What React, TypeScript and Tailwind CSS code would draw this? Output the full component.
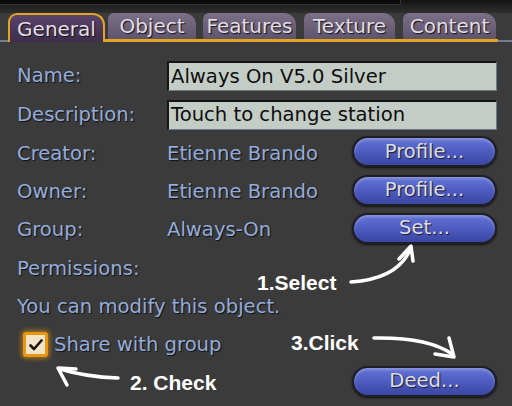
import React from 'react'

const tabs = [
  { label: 'General', w: 'w-[97px]', ml: 'ml-[8px]', active: true },
  { label: 'Object', w: 'w-[88px]', ml: 'ml-[3px]' },
  { label: 'Features', w: 'w-[93px]', ml: 'ml-[7px]' },
  { label: 'Texture', w: 'w-[91px]', ml: 'ml-[8px]' },
  { label: 'Content', w: 'w-[93px]', ml: 'ml-[8px]' },
]

const font = "font-['DejaVu_Sans',sans-serif]"
const shadow = '[text-shadow:1px_1px_1px_#111]'

function Label({ children }: { children: React.ReactNode }) {
  return <span className={`text-[19.6px] text-[#93acdc] ${shadow}`}>{children}</span>
}

function PillButton({ children }: { children: React.ReactNode }) {
  return (
    <button className="w-[145px] h-[31px] mb-[4px] rounded-full border-2 border-[#1e1e24] bg-gradient-to-b from-[#6374d6] via-[#4e5cc0] to-[#3a46a2] shadow-[inset_0_2px_3px_rgba(255,255,255,0.25),0_1px_2px_#111] flex items-center justify-center">
      <span className={`text-[19.6px] leading-none text-[#dcdce6] [text-shadow:1px_1px_1px_#1a1a30]`}>{children}</span>
    </button>
  )
}

function Field({ value }: { value: string }) {
  return (
    <div className="w-[330px] h-[30px] bg-[#c3cdc5] border-t-2 border-l-2 border-[#151515] border-b border-r border-b-[#6d7a8a] border-r-[#6d7a8a] flex items-center pl-[2px]">
      <span className="text-[19.6px] text-[#0e0e0e] leading-none">{value}</span>
    </div>
  )
}

export default function App() {
  return (
    <div className={`relative w-[512px] h-[406px] overflow-hidden bg-[#3b3b3b] ${font}`}>
      {/* top strip */}
      <div className="h-[13px] bg-gradient-to-b from-[#141414] to-[#2f2f2f] relative">
        <div className="w-[401px] h-[5px] bg-[#0b0b0b] border-b border-r border-[#333]" />
      </div>

      {/* tab bar */}
      <div className="flex items-end h-[29px] border-b-[3px] border-[#e3a323] ml-[8px] mr-[14px] relative">
        {tabs.map((t) => (
          <div
            key={t.label}
            className={
              t.active
                ? `w-[97px] h-[29px] -mb-[3px] rounded-tl-[9px] rounded-tr-[12px] border-2 border-b-0 border-[#e3a323] bg-gradient-to-b from-[#5a4368] to-[#3e2d4c] flex items-center justify-center`
                : `${t.w} ${t.ml} h-[26px] rounded-tl-[6px] rounded-tr-[12px] bg-gradient-to-b from-[#7c7088] to-[#5e546c] flex items-center justify-center`
            }
          >
            <span className={`text-[20px] leading-none text-[#e2dee8] ${shadow}`}>{t.label}</span>
          </div>
        ))}
      </div>
      <div className="absolute left-0 top-[40px] w-[8px] h-[2px] bg-[#6f7e94]" />
      <div className="absolute right-0 top-[40px] w-[14px] h-[2px] bg-[#6f7e94]" />

      {/* body */}
      <div className="pt-[15px] pl-[17px] pr-[15px] flex flex-col">
        <div className="h-[38px] flex items-center">
          <div className="w-[150px]"><Label>Name:</Label></div>
          <Field value="Always On V5.0 Silver" />
        </div>
        <div className="h-[39px] flex items-center">
          <div className="w-[150px]"><Label>Description:</Label></div>
          <Field value="Touch to change station" />
        </div>
        <div className="h-[39px] flex items-center">
          <div className="w-[150px]"><Label>Creator:</Label></div>
          <div className="flex-1"><Label>Etienne Brando</Label></div>
          <PillButton>Profile...</PillButton>
        </div>
        <div className="h-[38px] flex items-center">
          <div className="w-[150px]"><Label>Owner:</Label></div>
          <div className="flex-1"><Label>Etienne Brando</Label></div>
          <PillButton>Profile...</PillButton>
        </div>
        <div className="h-[38px] flex items-center">
          <div className="w-[150px]"><Label>Group:</Label></div>
          <div className="flex-1"><Label>Always-On</Label></div>
          <PillButton>Set...</PillButton>
        </div>
        <div className="h-[39px] flex items-center">
          <Label>Permissions:</Label>
        </div>
        <div className="h-[38px] flex items-center">
          <Label>You can modify this object.</Label>
        </div>
        <div className="h-[37px] flex items-center">
          <div className="w-[25px] h-[25px] ml-[6px] mr-[6px] rounded-[3px] border-[3px] border-[#e8960e] bg-[#f2e4c6] shadow-[0_0_4px_2px_rgba(232,150,14,0.55)] flex items-center justify-center">
            <svg width="14" height="12" viewBox="0 0 14 12">
              <path d="M1.5 6.5 L5 10 L12.5 1.5" fill="none" stroke="#1a140c" strokeWidth="2.6" strokeLinecap="round" strokeLinejoin="round" />
            </svg>
          </div>
          <Label>Share with group</Label>
        </div>
        <div className="h-[36px] flex items-center justify-end">
          <div className="mt-[4px] flex"><PillButton>Deed...</PillButton></div>
        </div>
      </div>

      {/* annotations */}
      <span className="absolute left-[257px] top-[267px] text-[21px] font-bold text-white font-['Liberation_Sans',sans-serif]">1.Select</span>
      <span className="absolute left-[291px] top-[327px] text-[21px] font-bold text-white font-['Liberation_Sans',sans-serif]">3.Click</span>
      <span className="absolute left-[130px] top-[367px] text-[21px] font-bold text-white font-['Liberation_Sans',sans-serif]">2. Check</span>
      <svg className="absolute inset-0 pointer-events-none" width="512" height="406" viewBox="0 0 512 406">
        <g fill="none" stroke="#fff" strokeWidth="3.5" strokeLinecap="round" strokeLinejoin="round">
          <path d="M351 282 Q397 279 410 250" />
          <path d="M399 259 L411 246 L413 261" />
          <path d="M118 378 Q86 377 60 369" />
          <path d="M76 369 L58 368 L67 385" />
          <path d="M374 338 Q428 337 452 354" />
          <path d="M449 338 L454 357 L435 354" />
        </g>
      </svg>
    </div>
  )
}
